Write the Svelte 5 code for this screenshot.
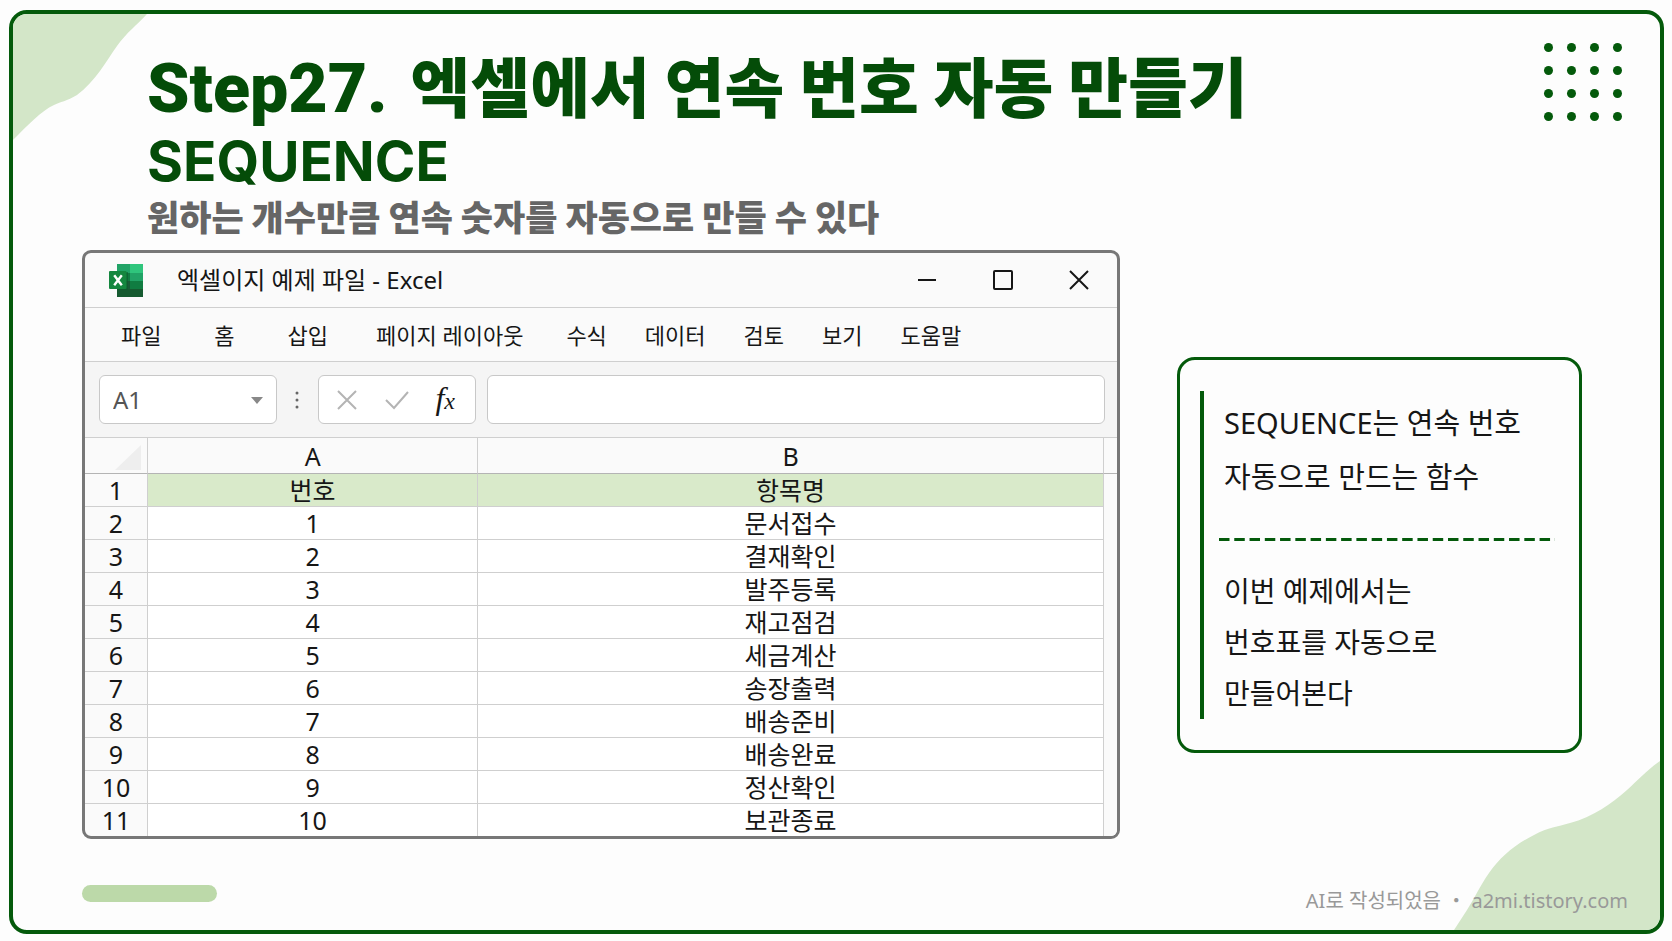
<script>
	const menu = [
		{ label: '파일', wide: true },
		{ label: '홈', wide: true },
		{ label: '삽입', wide: true },
		{ label: '페이지 레이아웃', wide: true },
		{ label: '수식' },
		{ label: '데이터' },
		{ label: '검토' },
		{ label: '보기' },
		{ label: '도움말' }
	];

	const items = [
		'문서접수',
		'결재확인',
		'발주등록',
		'재고점검',
		'세금계산',
		'송장출력',
		'배송준비',
		'배송완료',
		'정산확인',
		'보관종료'
	];

	const dots = Array.from({ length: 16 });

	let cell = $state('A1');
	let formula = $state('');
</script>

<div class="page">
	<div class="slide">
		<svg class="blob top" viewBox="0 0 134 126" aria-hidden="true">
			<path d="M0 0H134C124 11 114 18 104 32C94 46 82 68 64 81C54 87 47 88 41 91C28 97 15 111 0 126Z" />
		</svg>
		<svg class="blob bottom" viewBox="0 0 206 169" aria-hidden="true">
			<path d="M206 0C193 9 184 19 173 29C157 43 139 56 116 62C103 66 95 66 80 74C62 83 46 96 35 112C26 125 20 138 13 149L0 169H206Z" />
		</svg>
		<div class="dots" aria-hidden="true">
			{#each dots as _}
				<span></span>
			{/each}
		</div>

		<header>
			<h1><span class="step">Step27.</span> 엑셀에서 연속 번호 자동 만들기</h1>
			<h2>SEQUENCE</h2>
			<p>원하는 개수만큼 연속 숫자를 자동으로 만들 수 있다</p>
		</header>

		<main>
			<section class="window">
				<div class="titlebar">
					<svg class="logo" viewBox="0 0 34 33" aria-hidden="true">
						<path fill="#21a366" d="M8 0h13v9H8z" />
						<path fill="#2fc57c" d="M21 0h13v9H21z" />
						<path fill="#107c41" d="M8 9h13v8H8z" />
						<path fill="#21a366" d="M21 9h13v8H21z" />
						<path fill="#185c37" d="M8 17h13v16H8z" />
						<path fill="#107c41" d="M21 17h13v8H21z" />
						<path fill="#155a30" d="M8 25h26v8H8z" />
						<path fill="#0c5a2b" opacity=".6" d="M8 8h11v18H8z" />
						<rect fill="#14873f" y="7" width="17.500" height="18" rx="1" />
						<path stroke="#fff" stroke-width="2.400" fill="none" d="M5.200 11.200l7.600 10M12.800 11.200l-7.600 10" />
					</svg>
					<span class="caption">엑셀이지 예제 파일 - Excel</span>
					<div class="controls">
						<button aria-label="최소화">
							<svg viewBox="0 0 20 20"><path d="M1 10h18" /></svg>
						</button>
						<button aria-label="최대화">
							<svg viewBox="0 0 20 20"><rect x="1" y="1" width="18" height="18" rx="1" /></svg>
						</button>
						<button aria-label="닫기">
							<svg viewBox="0 0 20 20"><path d="M1 1l18 18M19 1L1 19" /></svg>
						</button>
					</div>
				</div>

				<nav>
					{#each menu as item}
						<button class:wide={item.wide}>{item.label}</button>
					{/each}
				</nav>

				<div class="formula">
					<div class="namebox">
						<select aria-label="이름 상자" bind:value={cell}>
							<option>A1</option>
						</select>
						<svg viewBox="0 0 12 7" aria-hidden="true"><path d="M0 0h12L6 7z" /></svg>
					</div>
					<svg class="more" viewBox="0 0 4 18" aria-hidden="true">
						<circle cx="2" cy="2" r="1.500" />
						<circle cx="2" cy="9" r="1.500" />
						<circle cx="2" cy="16" r="1.500" />
					</svg>
					<div class="actions">
						<button aria-label="취소">
							<svg viewBox="0 0 24 20"><path d="M3 1l18 18M21 1L3 19" /></svg>
						</button>
						<button aria-label="입력">
							<svg viewBox="0 0 24 20"><path d="M1 10l8 8L23 2" /></svg>
						</button>
						<button class="fx" aria-label="함수 삽입"><i>f</i><i class="x">x</i></button>
					</div>
					<input type="text" aria-label="수식 입력줄" bind:value={formula} />
				</div>

				<table>
					<colgroup>
						<col class="num" />
						<col class="a" />
						<col />
						<col class="gutter" />
					</colgroup>
					<thead>
						<tr>
							<th class="corner"><svg viewBox="0 0 26 25" aria-hidden="true"><path d="M26 0v25H0z" /></svg></th>
							<th>A</th>
							<th>B</th>
							<th class="edge"></th>
						</tr>
					</thead>
					<tbody>
						<tr class="fields">
							<th>1</th>
							<td>번호</td>
							<td>항목명</td>
							<td class="edge"></td>
						</tr>
						{#each items as item, i}
							<tr>
								<th>{i + 2}</th>
								<td>{i + 1}</td>
								<td>{item}</td>
								<td class="edge"></td>
							</tr>
						{/each}
					</tbody>
				</table>
			</section>

			<aside>
				<div class="note">
					<p>SEQUENCE는 연속 번호<br />자동으로 만드는 함수</p>
					<hr />
					<p>이번 예제에서는<br />번호표를 자동으로<br />만들어본다</p>
				</div>
			</aside>
		</main>

		<footer>
			<span class="pill"></span>
			<span class="credit">AI로 작성되었음 ・ <a href="https://a2mi.tistory.com">a2mi.tistory.com</a></span>
		</footer>
	</div>
</div>

<style>
	:global(body) {
		margin: 0;
		background: #fdfdfd;
	}

	.page {
		--green: #045a0b;
		--line: #cfcfcf;
		box-sizing: border-box;
		display: flex;
		min-height: 100vh;
		padding: 10px 8px 7px 9px;
		font-family: 'Noto Sans', 'Noto Sans CJK KR', sans-serif;
		color: #161616;
	}

	button,
	input,
	select {
		font: inherit;
		color: inherit;
	}

	button {
		padding: 0;
		border: 0;
		background: none;
	}

	.slide {
		position: relative;
		flex: 1;
		display: flex;
		flex-direction: column;
		border: 4px solid var(--green);
		border-radius: 18px;
		overflow: hidden;
	}

	.blob {
		position: absolute;
		fill: #d3e6c8;
	}

	.blob.top {
		top: 0;
		left: 0;
		width: 134px;
	}

	.blob.bottom {
		right: 0;
		bottom: 0;
		width: 206px;
	}

	.dots {
		position: absolute;
		top: 29px;
		right: 38px;
		display: grid;
		grid-template-columns: repeat(4, 9px);
		gap: 14px;
	}

	.dots span {
		height: 9px;
		border-radius: 50%;
		background: var(--green);
	}

	header {
		position: relative;
		padding: 26px 134px 0;
		font-family: 'Noto Sans CJK KR', sans-serif;
	}

	h1,
	h2,
	p {
		margin: 0;
	}

	h1 {
		font-size: 65px;
		font-weight: 900;
		line-height: 88px;
		color: #044c08;
	}

	.step {
		margin-right: 8px;
		font-family: Roboto, sans-serif;
		font-size: 68px;
		line-height: 1;
	}

	h2 {
		font-family: Inter, sans-serif;
		font-size: 55px;
		font-weight: 700;
		line-height: 66px;
		color: #044c08;
	}

	header p {
		font-size: 35px;
		font-weight: 900;
		line-height: 44px;
		color: #666;
	}

	main {
		position: relative;
		display: grid;
		grid-template-columns: 1038fr 405fr;
		gap: 57px;
		align-items: start;
		padding: 12px 78px 0 69px;
	}

	.window {
		border: 3px solid #777;
		border-radius: 9px;
		background: #fafafa;
		overflow: hidden;
	}

	.titlebar {
		display: flex;
		align-items: center;
		height: 54px;
		padding: 0 28px 0 24px;
		border-bottom: 1px solid var(--line);
	}

	.logo {
		width: 34px;
		height: 33px;
	}

	.caption {
		margin-left: 34px;
		font-size: 24px;
		line-height: 32px;
	}

	.controls {
		display: flex;
		gap: 56px;
		margin-left: auto;
	}

	.controls svg {
		display: block;
		width: 20px;
		height: 20px;
		fill: none;
		stroke: #161616;
		stroke-width: 2;
	}

	nav {
		display: flex;
		align-items: center;
		height: 53px;
		padding: 0 12px;
		border-bottom: 1px solid var(--line);
		font-size: 22px;
	}

	nav button {
		box-sizing: content-box;
		min-width: 30px;
		padding: 0 19px;
		line-height: 32px;
	}

	nav .wide {
		padding: 0 24px;
	}

	.formula {
		display: flex;
		align-items: center;
		height: 75px;
		padding: 0 12px 0 14px;
		border-bottom: 1px solid var(--line);
		background: #f5f5f5;
	}

	.namebox,
	.actions,
	.formula input {
		box-sizing: border-box;
		height: 49px;
		border: 1px solid #c8c8c8;
		border-radius: 6px;
		background: #fff;
	}

	.namebox {
		position: relative;
		width: 178px;
	}

	.namebox select {
		appearance: none;
		width: 100%;
		height: 100%;
		padding: 0 13px;
		border: 0;
		background: none;
		font-size: 24px;
		color: #555;
	}

	.namebox svg {
		position: absolute;
		top: 21px;
		right: 13px;
		width: 12px;
		height: 7px;
		fill: #888;
		pointer-events: none;
	}

	.more {
		width: 4px;
		height: 18px;
		margin: 0 19px 0 18px;
		fill: #666;
	}

	.actions {
		display: flex;
		align-items: center;
		justify-content: space-between;
		width: 158px;
		padding: 0 20px 0 16px;
	}

	.actions svg {
		display: block;
		width: 24px;
		height: 20px;
		fill: none;
		stroke: #b4b4b4;
		stroke-width: 2;
	}

	.fx {
		font-family: 'Liberation Serif', serif;
		font-size: 32px;
		line-height: 36px;
	}

	.fx .x {
		font-size: 24px;
	}

	.formula input {
		flex: 1;
		min-width: 0;
		margin-left: 11px;
		padding: 0 12px;
		font-size: 24px;
	}

	table {
		width: 100%;
		table-layout: fixed;
		border-collapse: separate;
		border-spacing: 0;
		font-size: 25px;
		line-height: 32px;
		text-align: center;
	}

	.num {
		width: 63px;
	}

	.a {
		width: 32%;
	}

	.gutter {
		width: 13px;
	}

	th,
	td {
		box-sizing: border-box;
		height: 33px;
		padding: 0;
		border-right: 1px solid var(--line);
		border-bottom: 1px solid var(--line);
		font-weight: 400;
		white-space: nowrap;
	}

	td {
		background: #fff;
	}

	thead th {
		height: 36px;
		border-bottom-color: #b4b4b4;
	}

	.corner svg {
		display: block;
		width: 26px;
		height: 25px;
		margin: 4px 6px 0 auto;
		fill: #eee;
	}

	.fields td {
		background: #d9eaca;
	}

	.edge,
	.fields .edge {
		border-right: 0;
		background: #fafafa;
	}

	tbody .edge {
		border-bottom: 0;
	}

	tbody tr:last-child > * {
		height: 32px;
		border-bottom: 0;
	}

	aside {
		margin-top: 107px;
		padding: 31px 24px 31px 20px;
		border: 3px solid var(--green);
		border-radius: 18px;
	}

	.note {
		padding: 5px 0 0 15px;
		border-left: 4px solid var(--green);
		font-size: 28px;
		line-height: 51px;
	}

	.note p {
		padding-left: 5px;
	}

	.note p:first-child {
		font-size: 29px;
		line-height: 54px;
	}

	hr {
		height: 3px;
		margin: 34px 0 25px;
		border: 0;
		background: linear-gradient(90deg, var(--green) 66%, transparent 66%) 0 0 / 15px 3px round;
	}

	footer {
		position: relative;
		display: flex;
		align-items: flex-start;
		justify-content: space-between;
		margin-top: auto;
		padding: 0 32px 13px 69px;
	}

	.pill {
		width: 135px;
		height: 17px;
		border-radius: 9px;
		background: #bcd9a9;
	}

	.credit {
		font-size: 20px;
		line-height: 32px;
		color: #999;
	}

	.credit a {
		color: inherit;
		text-decoration: none;
	}
</style>
